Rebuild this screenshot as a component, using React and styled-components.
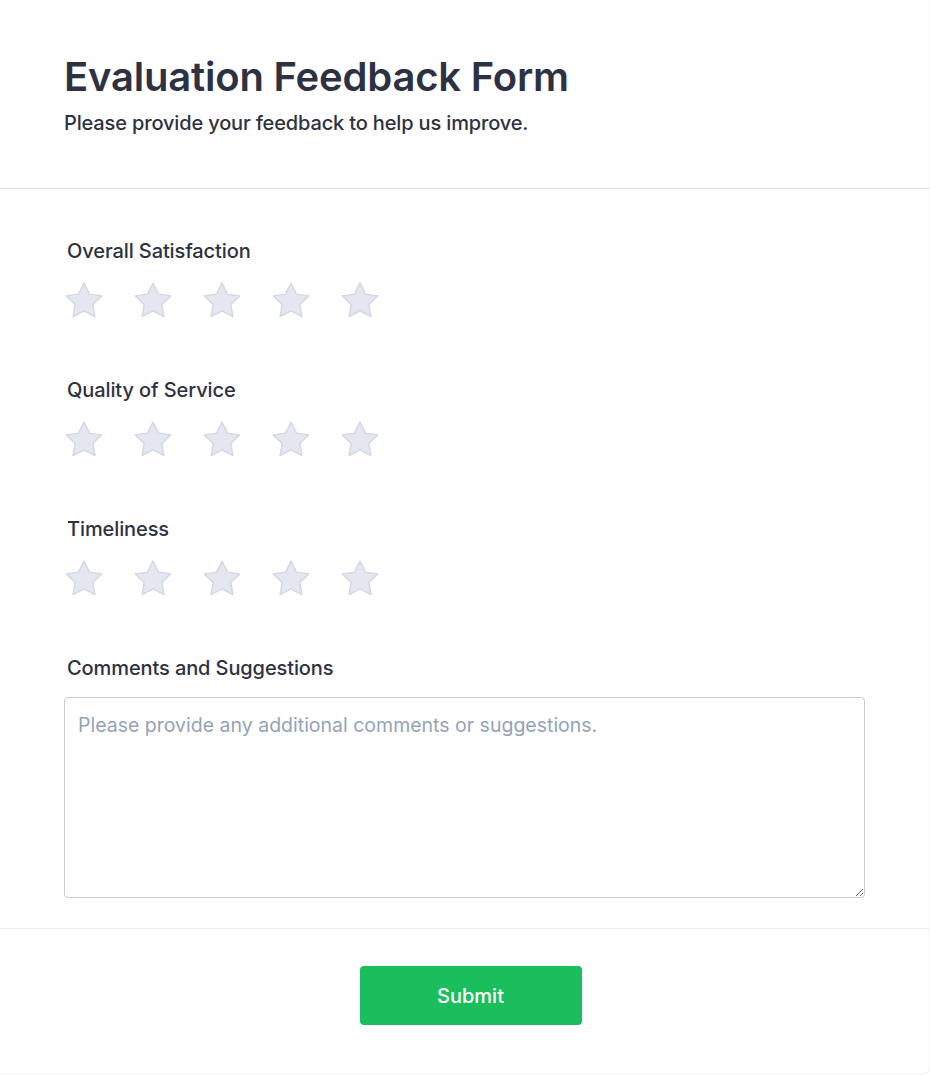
import React, { useState } from "react";
import styled, { createGlobalStyle } from "styled-components";

const GlobalStyle = createGlobalStyle`
  body {
    margin: 0;
    background: #fff;
    font-family: Inter, "Noto Sans", sans-serif;
  }
`;

const Card = styled.div`
  width: 930px;
  box-sizing: border-box;
  background: #fff;
  border-right: 1px solid #f3f3f6;
  border-bottom: 1px solid #f3f3f6;
  border-radius: 0 0 6px 0;
`;

const Header = styled.header`
  padding: 53px 64px 51px;
  border-bottom: 1px solid #dcdcee;
`;

const Title = styled.h1`
  margin: 0;
  font-size: 40px;
  line-height: 48px;
  font-weight: 600;
  color: #2d3142;
  letter-spacing: -0.2px;
`;

const Subtitle = styled.p`
  margin: 8px 0 0;
  font-size: 20px;
  line-height: 28px;
  font-weight: 500;
  color: #2d3142;
  letter-spacing: -0.15px;
`;

const Body = styled.div`
  padding: 47px 64px 30px 64px;
  display: flex;
  flex-direction: column;
`;

const Field = styled.div`
  display: flex;
  flex-direction: column;
  gap: ${({ $gap }) => $gap || "15px"};
  margin-bottom: ${({ $last }) => ($last ? "0" : "56px")};
`;

const Label = styled.label`
  padding-left: 3px;
  font-size: 20px;
  line-height: 30px;
  font-weight: 500;
  color: #2d3142;
  letter-spacing: -0.1px;
`;

const Stars = styled.div`
  display: flex;
  gap: 31px;
  padding-left: 1px;
`;

const StarButton = styled.button`
  border: 0;
  padding: 0;
  background: none;
  cursor: pointer;
  display: flex;
  width: 38px;
  height: 38px;
  align-items: center;
  justify-content: center;
`;

const TextArea = styled.textarea`
  box-sizing: border-box;
  width: 100%;
  height: 201px;
  padding: 12px 13px;
  border: 1px solid #c8c9dd;
  border-radius: 4px;
  font-family: Inter, "Noto Sans", sans-serif;
  font-size: 19.5px;
  line-height: 30px;
  color: #2d3142;
  resize: vertical;
  outline: none;
  &::placeholder {
    color: #94a3b8;
  }
`;

const Footer = styled.footer`
  border-top: 1px solid #ececf2;
  padding: 37px 0 48px 12px;
  display: flex;
  justify-content: center;
`;

const SubmitButton = styled.button`
  width: 222px;
  height: 59px;
  border: 0;
  border-radius: 4px;
  background: #1abe5d;
  color: #fff;
  font-family: Inter, "Noto Sans", sans-serif;
  font-size: 20px;
  font-weight: 500;
  cursor: pointer;
`;

const Star = ({ filled }) => (
  <svg width="38" height="36" viewBox="1.4 1.4 21.2 20.4">
    <polygon
      points="12,2 15.09,8.26 22,9.27 17,14.14 18.18,21.02 12,17.77 5.82,21.02 7,14.14 2,9.27 8.91,8.26"
      fill={filled ? "#facc15" : "#e4e7f0"}
      stroke={filled ? "#eab308" : "#d3d7e3"}
      strokeWidth="0.8"
      strokeLinejoin="round"
    />
  </svg>
);

const Rating = ({ label }) => {
  const [value, setValue] = useState(0);
  return (
    <Field>
      <Label>{label}</Label>
      <Stars>
        {[1, 2, 3, 4, 5].map((n) => (
          <StarButton key={n} type="button" onClick={() => setValue(n)}>
            <Star filled={n <= value} />
          </StarButton>
        ))}
      </Stars>
    </Field>
  );
};

const App = () => {
  return (
    <>
      <GlobalStyle />
      <Card>
        <Header>
          <Title>Evaluation Feedback Form</Title>
          <Subtitle>Please provide your feedback to help us improve.</Subtitle>
        </Header>
        <Body>
          <Rating label="Overall Satisfaction" />
          <Rating label="Quality of Service" />
          <Rating label="Timeliness" />
          <Field $last $gap="14px">
            <Label>Comments and Suggestions</Label>
            <TextArea placeholder="Please provide any additional comments or suggestions." />
          </Field>
        </Body>
        <Footer>
          <SubmitButton type="button">Submit</SubmitButton>
        </Footer>
      </Card>
    </>
  );
};

export default App;
